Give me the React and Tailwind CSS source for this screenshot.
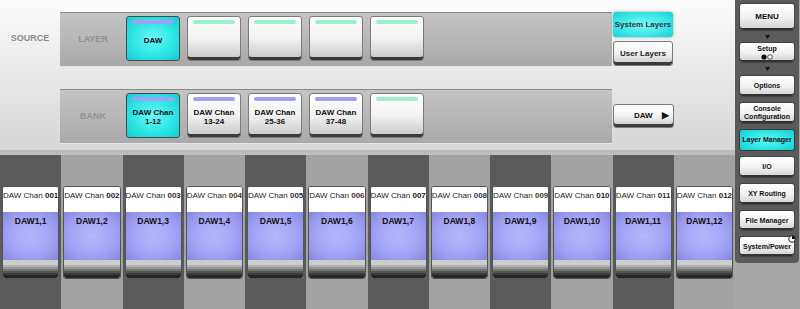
const font = { fontFamily: '"Liberation Sans", Arial, sans-serif' };

const whiteBtn =
  "bg-linear-to-b from-[#ffffff] via-[#f2f2f2] to-[#c6c6c6] border border-[#7a7a7a] shadow-[inset_0_-3px_0_#3a3a3a]";
const cyanBtn =
  "bg-[radial-gradient(ellipse_at_center,#6ef7f7_0%,#2fe6e6_55%,#16cccc_100%)] border border-[#4a4a4a]";

function PadButton({ active, bar, lines = [] }) {
  return (
    <div
      className={`relative w-[54px] h-[45px] rounded-[3px] flex flex-col items-center justify-center ${
        active ? cyanBtn : whiteBtn
      }`}
    >
      {bar === "green" && (
        <div className="absolute left-[5px] right-[5px] top-[3px] h-[4px] rounded-full bg-[#9af0c8]" />
      )}
      {bar === "blue" && (
        <div className="absolute left-[5px] right-[5px] top-[3px] h-[4px] rounded-full bg-[#a0a0f4]" />
      )}
      <div className="pt-[3px] text-[8px] font-bold leading-[9px] text-[#111] text-center">
        {lines.map((l) => (
          <div key={l}>{l}</div>
        ))}
      </div>
    </div>
  );
}

function Panel({ label, children }) {
  return (
    <div className="w-[552px] h-[54px] flex border-t border-[#8a8a8a] bg-linear-to-b from-[#c4c4c4] to-[#a9a9a9] shadow-[0_1px_0_#e6e6e6]">
      <div className="w-[66px] flex items-center justify-center text-[9px] font-bold text-[#919191]">
        {label}
      </div>
      <div className="flex gap-[7px] pt-[3px]">{children}</div>
    </div>
  );
}

function SideBtn({ children, active, h = "h-[22px]", extra }) {
  return (
    <div
      className={`relative w-[56px] ${h} rounded-[3px] flex flex-col items-center justify-center text-[7px] font-bold leading-[8px] text-[#111] text-center ${
        active
          ? "bg-[radial-gradient(ellipse_at_center,#6ef7f7_0%,#2fe6e6_55%,#16cccc_100%)] border border-[#3a3a3a]"
          : "bg-linear-to-b from-[#ffffff] via-[#f2f2f2] to-[#d0d0d0] border border-[#444] shadow-[inset_0_-2px_0_#333]"
      }`}
    >
      {children}
      {extra}
    </div>
  );
}

function Arrow({ h }) {
  return (
    <div className={`w-[56px] ${h} flex items-center justify-center`}>
      <svg width="5" height="4" viewBox="0 0 5 4">
        <path d="M0 0 H5 L2.5 4 Z" fill="#111" />
      </svg>
    </div>
  );
}

const numColors = [
  "text-[#222]",
  "text-[#1c2540]",
  "text-[#3a2a18]",
  "text-[#4a3420]",
  "text-[#1e3052]",
  "text-[#4a3420]",
  "text-[#222]",
  "text-[#1f3a6a]",
  "text-[#4a3418]",
  "text-[#222]",
  "text-[#333]",
  "text-[#222]",
];

function Strip({ i }) {
  const n = String(i + 1).padStart(3, "0");
  return (
    <div className={`pt-[31px] px-[2px] ${i % 2 === 0 ? "bg-[#5a5a5a]" : "bg-[#a2a2a2]"}`}>
      <div className="h-[93px] rounded-[3px] border border-[#555] overflow-hidden flex flex-col bg-white">
        <div className="h-[25px] shrink-0 bg-white text-[8px] text-[#222] text-center whitespace-nowrap pt-[4px] leading-[9px]">
          DAW Chan <span className={`font-bold ${numColors[i]}`}>{n}</span>
        </div>
        <div className="h-[48px] shrink-0 bg-[radial-gradient(ellipse_at_center,#b6b6fb_0%,#a4a4f6_55%,#8686e2_100%)] text-[8.5px] font-bold text-[#111] text-center pt-[4px] leading-[10px]">
          DAW1,{i + 1}
        </div>
        <div className="h-[5px] shrink-0 bg-[#cdcdcd]" />
        <div className="h-[2px] shrink-0 bg-[#b4b4b4]" />
        <div className="h-[2px] shrink-0 bg-[#959595]" />
        <div className="h-[2px] shrink-0 bg-[#747474]" />
        <div className="h-[2px] shrink-0 bg-[#545454]" />
        <div className="h-[2px] shrink-0 bg-[#3c3c3c]" />
        <div className="flex-1 bg-[#262626]" />
      </div>
    </div>
  );
}

function PowerIcon() {
  return (
    <svg className="absolute right-[-2px] top-[-2px]" width="8" height="8" viewBox="0 0 8 8">
      <circle cx="4" cy="4" r="3.3" fill="#fff" stroke="#111" strokeWidth="0.9" />
      <path d="M4 4 L4 0.7 A3.3 3.3 0 0 1 7.3 4 Z" fill="#111" />
    </svg>
  );
}

function Dots() {
  return (
    <svg width="12" height="6" viewBox="0 0 12 6" className="mt-[1px]">
      <circle cx="3" cy="3" r="2.6" fill="#111" />
      <circle cx="9" cy="3" r="2.3" fill="#fff" stroke="#111" strokeWidth="0.7" />
    </svg>
  );
}

export default function App() {
  return (
    <div className="w-[800px] h-[309px] flex overflow-hidden bg-[#d8d8d8]" style={font}>
      {/* main area */}
      <div className="w-[735px] flex flex-col">
        {/* source / layer / bank */}
        <div className="h-[150px] bg-linear-to-b from-[#fcfcfc] to-[#d6d6d6] pt-[12px] flex flex-col gap-[23px]">
          <div className="flex">
            <div className="w-[60px] flex items-center justify-center text-[9px] font-bold text-[#8c8c8c]">
              SOURCE
            </div>
            <Panel label="LAYER">
              <PadButton active bar="blue" lines={["DAW"]} />
              <PadButton bar="green" />
              <PadButton bar="green" />
              <PadButton bar="green" />
              <PadButton bar="green" />
            </Panel>
            <div className="ml-[1px] flex flex-col gap-[4px]">
              <div className="w-[60px] h-[25px] rounded-[3px] flex items-center justify-center text-[8px] font-bold text-[#333] bg-[radial-gradient(ellipse_at_center,#7ff8f8_0%,#3ee8e8_55%,#1ccfcf_100%)] shadow-[0_0_3px_#7aa]">
                System Layers
              </div>
              <div className={`w-[60px] h-[25px] rounded-[3px] flex items-center justify-center text-[8px] font-bold text-[#222] ${whiteBtn}`}>
                User Layers
              </div>
            </div>
          </div>
          <div className="flex">
            <div className="w-[60px]" />
            <Panel label="BANK">
              <PadButton active bar="blue" lines={["DAW Chan", "1-12"]} />
              <PadButton bar="blue" lines={["DAW Chan", "13-24"]} />
              <PadButton bar="blue" lines={["DAW Chan", "25-36"]} />
              <PadButton bar="blue" lines={["DAW Chan", "37-48"]} />
              <PadButton bar="green" />
            </Panel>
            <div className="ml-[1px] flex items-center">
              <div className={`relative w-[61px] h-[24px] rounded-[3px] flex items-center text-[8px] font-bold text-[#111] ${whiteBtn}`}>
                <span className="ml-[20px]">DAW</span>
                <span className="ml-auto mr-[4px] text-[9px]">▶</span>
              </div>
            </div>
          </div>
        </div>
        <div className="h-[5px] bg-[#bdbdbd]" />
        {/* channel strips */}
        <div className="flex-1 grid grid-cols-12">
          {Array.from({ length: 12 }).map((_, i) => (
            <Strip key={i} i={i} />
          ))}
        </div>
      </div>

      {/* menu sidebar */}
      <div className="w-[65px] flex flex-col bg-[#a8a8a8]">
        <div className="h-[263px] w-[64px] bg-[#5a5a5a] rounded-b-[4px] pl-[4px] pt-[3px] flex flex-col">
          <SideBtn h="h-[28px]">
            <span className="text-[8px]">MENU</span>
          </SideBtn>
          <Arrow h="h-[11px]" />
          <SideBtn h="h-[21px]">
            <span>Setup</span>
            <Dots />
          </SideBtn>
          <Arrow h="h-[12px]" />
          <div className="flex flex-col gap-[5px]">
            <SideBtn>Options</SideBtn>
            <SideBtn>
              <span>Console</span>
              <span>Configuration</span>
            </SideBtn>
            <SideBtn active>Layer Manager</SideBtn>
            <SideBtn>I/O</SideBtn>
            <SideBtn>XY Routing</SideBtn>
            <SideBtn h="h-[21px]">File Manager</SideBtn>
            <SideBtn h="h-[21px]" extra={<PowerIcon />}>
              System/Power
            </SideBtn>
          </div>
        </div>
      </div>
    </div>
  );
}
